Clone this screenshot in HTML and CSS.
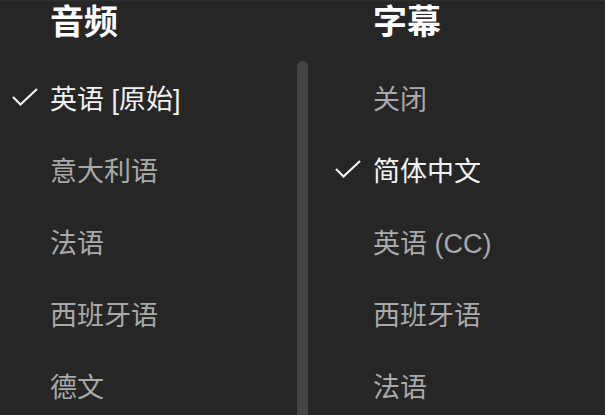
FILE: index.html
```html
<!DOCTYPE html>
<html lang="zh-CN">
<head>
<meta charset="utf-8">
<link rel="stylesheet" href="styles.css">
</head>
<body>
<div class="menu">
  <section class="pane pane-left">
    <h2 class="title">音频</h2>
    <ul class="list">
      <li class="item selected"><svg class="check" viewBox="0 0 26 18"><polyline points="1,9 8.5,16.5 25,1"/></svg><span>英语 [原始]</span></li>
      <li class="item"><span class="check"></span><span>意大利语</span></li>
      <li class="item"><span class="check"></span><span>法语</span></li>
      <li class="item"><span class="check"></span><span>西班牙语</span></li>
      <li class="item"><span class="check"></span><span>德文</span></li>
    </ul>
  </section>
  <div class="scrollbar"></div>
  <section class="pane pane-right">
    <h2 class="title">字幕</h2>
    <ul class="list">
      <li class="item"><span class="check"></span><span>关闭</span></li>
      <li class="item selected"><svg class="check" viewBox="0 0 26 18"><polyline points="1,9 8.5,16.5 25,1"/></svg><span>简体中文</span></li>
      <li class="item"><span class="check"></span><span>英语 (CC)</span></li>
      <li class="item"><span class="check"></span><span>西班牙语</span></li>
      <li class="item"><span class="check"></span><span>法语</span></li>
    </ul>
  </section>
</div>
</body>
</html>
```
FILE: styles.css
```css
html, body {
  margin: 0;
  padding: 0;
  background: #262626;
}
body {
  width: 605px;
  height: 415px;
  overflow: hidden;
  font-family: "Liberation Sans", "Noto Sans CJK SC", sans-serif;
  border-top: 1px solid #2f2f2f;
  box-sizing: border-box;
}
.menu {
  display: flex;
  height: 414px;
}
.pane {
  width: 297px;
  flex: none;
}
.pane-left {
  padding-left: 12px;
  box-sizing: border-box;
}
.pane-right {
  padding-left: 27px;
  box-sizing: border-box;
}
.title {
  margin: 0;
  padding-left: 38px;
  height: 42px;
  line-height: 42px;
  font-size: 34px;
  font-weight: bold;
  color: #ffffff;
}
.list {
  list-style: none;
  margin: 0;
  padding: 18px 0 0 0;
}
.item {
  display: flex;
  align-items: center;
  gap: 12px;
  height: 72px;
  font-size: 27px;
  color: #a9a9a9;
}
.item.selected {
  color: #f2f2f2;
}
.check {
  width: 26px;
  height: 18px;
  flex: none;
}
svg.check polyline {
  fill: none;
  stroke: #f2f2f2;
  stroke-width: 2.2;
}
.scrollbar {
  width: 11px;
  flex: none;
  margin-top: 60px;
  background: #444444;
  border-radius: 6px 6px 0 0;
}
```
